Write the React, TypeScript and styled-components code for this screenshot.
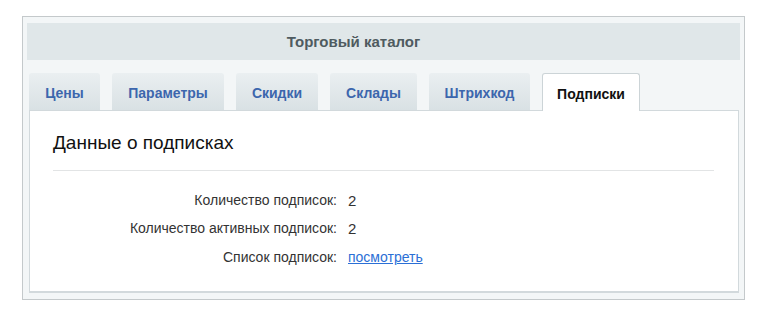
import React from "react";
import styled, { createGlobalStyle } from "styled-components";

const Global = createGlobalStyle`
  html, body { margin: 0; padding: 0; background: #ffffff; }
  body { font-family: "Liberation Sans", Arial, sans-serif; }
`;

const Frame = styled.div`
  box-sizing: border-box;
  margin: 16px 0 0 22px;
  width: 723px;
  height: 284px;
  border: 1px solid #c4c9cb;
  background: #f3f6f7;
  padding: 6px 4px 0 4px;
`;

const Header = styled.div`
  box-sizing: border-box;
  height: 37px;
  width: 713px;
  padding-right: 60px;
  background: #e0e7e9;
  display: flex;
  align-items: center;
  justify-content: center;
  font-size: 15px;
  font-weight: bold;
  color: #4f5b60;
`;

const TabRow = styled.div`
  display: flex;
  gap: 12px;
  margin: 13px 0 0 2px;
  height: 37px;
  position: relative;
  z-index: 1;
`;

const Tab = styled.div<{ $w: number; $active?: boolean }>`
  box-sizing: border-box;
  width: ${(p) => p.$w}px;
  height: ${(p) => (p.$active ? 38 : 37)}px;
  border-radius: 3px 3px 0 0;
  display: flex;
  align-items: center;
  justify-content: center;
  padding-top: 3px;
  font-size: 14px;
  font-weight: bold;
  color: ${(p) => (p.$active ? "#111111" : "#3c66ad")};
  background: ${(p) =>
    p.$active ? "#ffffff" : "linear-gradient(#eaeff1, #d9e1e4)"};
  border: ${(p) => (p.$active ? "1px solid #ccd4d7" : "none")};
  border-bottom: none;
`;

const Panel = styled.div`
  box-sizing: border-box;
  margin-left: 2px;
  width: 710px;
  height: 183px;
  background: #ffffff;
  border: 1px solid #d2d9dc;
  border-bottom-width: 2px;
  padding: 0 24px 0 23px;
`;

const Title = styled.div`
  font-size: 19px;
  color: #111111;
  padding-top: 21px;
  height: 38px;
  border-bottom: 1px solid #e2e4e5;
  box-sizing: content-box;
`;

const Rows = styled.div`
  display: grid;
  grid-template-columns: 284px auto;
  column-gap: 11px;
  row-gap: 11px;
  margin-top: 21px;
  align-items: center;
`;

const Label = styled.div`
  text-align: right;
  font-size: 14px;
  color: #333333;
  line-height: 17px;
`;

const Value = styled.div`
  font-size: 15px;
  color: #333333;
  line-height: 17px;
`;

const Link = styled.a`
  font-size: 14px;
  color: #2b6fd6;
  text-decoration: underline;
  line-height: 17px;
`;

const tabs = [
  { t: "Цены", w: 71 },
  { t: "Параметры", w: 112 },
  { t: "Скидки", w: 82 },
  { t: "Склады", w: 87 },
  { t: "Штрихкод", w: 101 },
  { t: "Подписки", w: 98, active: true },
];

export default function App() {
  return (
    <>
      <Global />
      <Frame>
        <Header>Торговый каталог</Header>
        <TabRow>
          {tabs.map((x) => (
            <Tab key={x.t} $w={x.w} $active={x.active}>
              {x.t}
            </Tab>
          ))}
        </TabRow>
        <Panel>
          <Title>Данные о подписках</Title>
          <Rows>
            <Label>Количество подписок:</Label>
            <Value>2</Value>
            <Label>Количество активных подписок:</Label>
            <Value>2</Value>
            <Label>Список подписок:</Label>
            <Value>
              <Link href="#">посмотреть</Link>
            </Value>
          </Rows>
        </Panel>
      </Frame>
    </>
  );
}
